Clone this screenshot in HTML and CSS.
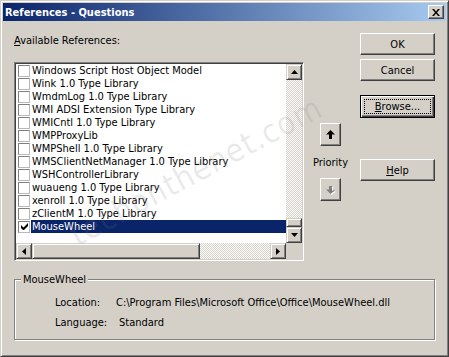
FILE: index.html
```html
<!DOCTYPE html>
<html>
<head>
<meta charset="utf-8">
<title>References - Questions</title>
<link rel="stylesheet" href="styles.css">
</head>
<body>
<div class="window">
  <div class="titlebar">
    <span class="title">References - Questions</span>
    <button class="close" aria-label="Close"><svg width="8" height="7" viewBox="0 0 8 7"><path d="M0 0h2l2 2.4L6 0h2L5 3.5 8 7H6L4 4.6 2 7H0l3-3.5z"/></svg></button>
  </div>
  <div class="main">
    <div class="listcol">
      <div class="label"><u>A</u>vailable References:</div>
      <div class="listbox">
        <ul class="items">
          <li><span class="cb"></span><span class="txt">Windows Script Host Object Model</span></li>
          <li><span class="cb"></span><span class="txt">Wink 1.0 Type Library</span></li>
          <li><span class="cb"></span><span class="txt">WmdmLog 1.0 Type Library</span></li>
          <li><span class="cb"></span><span class="txt">WMI ADSI Extension Type Library</span></li>
          <li><span class="cb"></span><span class="txt">WMICntl 1.0 Type Library</span></li>
          <li><span class="cb"></span><span class="txt">WMPProxyLib</span></li>
          <li><span class="cb"></span><span class="txt">WMPShell 1.0 Type Library</span></li>
          <li><span class="cb"></span><span class="txt">WMSClientNetManager 1.0 Type Library</span></li>
          <li><span class="cb"></span><span class="txt">WSHControllerLibrary</span></li>
          <li><span class="cb"></span><span class="txt">wuaueng 1.0 Type Library</span></li>
          <li><span class="cb"></span><span class="txt">xenroll 1.0 Type Library</span></li>
          <li><span class="cb"></span><span class="txt">zClientM 1.0 Type Library</span></li>
          <li class="sel"><span class="cb"><svg width="7" height="7" viewBox="0 0 7 7"><path d="M0 2v3l2 2h1l4-4V0L2.5 4.5z"/></svg></span><span class="txt">MouseWheel</span></li>
        </ul>
        <div class="vscroll">
          <div class="sbtn"><svg width="7" height="4" viewBox="0 0 7 4"><path d="M3.5 0L7 4H0z"/></svg></div>
          <div class="track"></div>
          <div class="vthumb"></div>
          <div class="sbtn"><svg width="7" height="4" viewBox="0 0 7 4"><path d="M0 0h7L3.5 4z"/></svg></div>
        </div>
        <div class="hscroll">
          <div class="sbtn"><svg width="4" height="7" viewBox="0 0 4 7"><path d="M0 3.5L4 0v7z"/></svg></div>
          <div class="hthumb"></div>
          <div class="track"></div>
          <div class="sbtn"><svg width="4" height="7" viewBox="0 0 4 7"><path d="M0 0l4 3.5L0 7z"/></svg></div>
        </div>
        <div class="corner"></div>
      </div>
    </div>
    <div class="prio">
      <button class="pbtn up"><svg width="9" height="9" viewBox="0 0 9 9"><path d="M4.5 0L9 4.5H6V9H3V4.5H0z"/></svg></button>
      <div class="plabel">Priority</div>
      <button class="pbtn down" disabled><svg width="10" height="10" viewBox="0 0 10 10"><path class="hl" d="M4 2h3v4.5h3L5.5 10 1 5.5h3z"/><path d="M3 1h3v4.5h3L4.5 9 0 4.5h3z"/></svg></button>
    </div>
    <div class="buttons">
      <button class="btn">OK</button>
      <button class="btn cancel">Cancel</button>
      <button class="btn default"><u>B</u>rowse...</button>
      <button class="btn help"><u>H</u>elp</button>
    </div>
  </div>
  <div class="group">
    <div class="legend">MouseWheel</div>
    <div class="info">
      <span>Location:</span><span>C:\Program Files\Microsoft Office\Office\MouseWheel.dll</span>
      <span>Language:</span><span class="std">Standard</span>
    </div>
  </div>
  <div class="watermark">techonthenet.com</div>
</div>
</body>
</html>
```

FILE: styles.css
```css
* { box-sizing: border-box; }
html, body { margin: 0; padding: 0; background: #d4d0c8; }
body {
  font-family: "DejaVu Sans Condensed", "DejaVu Sans", sans-serif;
  font-stretch: condensed;
  font-size: 11px;
  line-height: 13px;
  color: #000;
}
.window {
  position: relative;
  width: 449px;
  height: 357px;
  background: #d4d0c8;
  border: 1px solid;
  border-color: #d4d0c8 #404040 #404040 #d4d0c8;
  box-shadow: inset 1px 1px #fff, inset -1px -1px #808080;
  padding: 2px;
  display: flex;
  flex-direction: column;
  overflow: hidden;
}
.titlebar {
  height: 18px;
  background: linear-gradient(to right, #0a246a, #a6caf0);
  display: flex;
  align-items: center;
  justify-content: space-between;
  padding: 0 2px 0 2px;
}
.title { color: #fff; font-weight: bold; font-size: 11px; }
.close {
  width: 16px; height: 14px; padding: 0; margin: 0;
  background: #d4d0c8;
  border: 1px solid; border-color: #fff #404040 #404040 #fff;
  box-shadow: inset -1px -1px #808080, inset 1px 1px #d4d0c8;
  display: flex; align-items: center; justify-content: center;
}
.close svg { fill: #000; display: block; margin-left: -1px; }
.main {
  display: flex;
  padding: 12px 11px 0 11px;
}
.listcol { width: 290px; display: flex; flex-direction: column; }
.label { margin-top: 1px; height: 13px; }
.listbox {
  margin-top: 15px;
  height: 199px;
  border: 1px solid; border-color: #808080 #fff #fff #808080;
  box-shadow: inset 1px 1px #404040, inset -1px -1px #d4d0c8;
  padding: 1px;
  display: grid;
  grid-template-columns: 1fr 16px;
  grid-template-rows: 1fr 16px;
  background: #fff;
}
.items { list-style: none; margin: 0; padding: 0; background: #fff; overflow: hidden; }
.items li { height: 13px; display: flex; align-items: center; white-space: nowrap; }
.cb {
  width: 12px; height: 12px; margin-left: 2px; margin-right: 1px; flex: none;
  border: 1px solid; border-color: #808080 #b8b8b8 #b8b8b8 #808080;
  background: #fff;
  display: flex; align-items: center; justify-content: center;
}
.cb svg { display: block; fill: #000; }
.txt { flex: 1; padding-left: 1px; height: 13px; }
.sel .txt { background: #0a246a; color: #fff; }
.sbtn {
  width: 16px; height: 16px; flex: none;
  background: #d4d0c8;
  border: 1px solid; border-color: #d4d0c8 #404040 #404040 #d4d0c8;
  box-shadow: inset 1px 1px #fff, inset -1px -1px #808080;
  display: flex; align-items: center; justify-content: center;
}
.sbtn svg { display: block; fill: #000; }
.track {
  flex: 1;
  background: repeating-conic-gradient(#d4d0c8 0 25%, #fff 0 50%) 0 0 / 2px 2px;
}
.vscroll { display: flex; flex-direction: column; }
.vthumb, .hthumb {
  background: #d4d0c8;
  border: 1px solid; border-color: #d4d0c8 #404040 #404040 #d4d0c8;
  box-shadow: inset 1px 1px #fff, inset -1px -1px #808080;
}
.vthumb { height: 9px; }
.hscroll { display: flex; }
.hthumb { width: 168px; }
.corner { background: #d4d0c8; }
.prio {
  width: 21px; margin-left: 16px;
  display: flex; flex-direction: column; align-items: center;
}
.pbtn {
  width: 21px; height: 23px; padding: 0; margin: 0; flex: none;
  background: #d4d0c8;
  border: 1px solid; border-color: #fff #404040 #404040 #fff;
  box-shadow: inset -1px -1px #808080, inset 1px 1px #d4d0c8;
  display: flex; align-items: center; justify-content: center;
}
.pbtn.up { margin-top: 90px; }
.pbtn.up svg { fill: #000; display: block; }
.pbtn.down { margin-top: 9px; }
.pbtn.down svg { fill: #808080; display: block; }
.pbtn.down svg .hl { fill: #fff; }
.plabel { margin-top: 10px; white-space: nowrap; height: 13px; }
.buttons { width: 75px; margin-left: 19px; display: flex; flex-direction: column; }
.btn {
  width: 75px; height: 22px; padding: 0; margin: 0;
  font: inherit; color: #000;
  background: #d4d0c8;
  border: 1px solid; border-color: #fff #404040 #404040 #fff;
  box-shadow: inset -1px -1px #808080, inset 1px 1px #d4d0c8;
}
.cancel { margin-top: 4px; }
.default {
  margin-top: 14px; height: 23px;
  border-color: #000;
  box-shadow: inset 1px 1px #fff, inset -1px -1px #404040, inset -2px -2px #808080;
  outline: 1px dotted #000; outline-offset: -5px;
}
.help { margin-top: 41px; }
.group {
  margin: 18px 11px 0 11px;
  height: 61px;
  border: 1px solid #808080;
  box-shadow: inset 1px 1px #fff, 1px 1px #fff;
  padding: 0 0 0 40px;
}
.legend {
  margin: -7px 0 0 -34px;
  width: fit-content;
  padding: 0 2px;
  background: #d4d0c8;
  height: 13px;
}
.info {
  margin-top: 10px;
  display: grid;
  grid-template-columns: 61px auto;
  row-gap: 7px;
  white-space: nowrap;
}
.std { padding-left: 3px; }
.watermark {
  position: absolute;
  left: 45px; top: 150px;
  width: 300px;
  text-align: center;
  font-family: "DejaVu Sans", sans-serif;
  font-size: 32px; line-height: 40px;
  letter-spacing: 1px;
  color: rgba(120, 120, 120, 0.16);
  transform: rotate(-28deg);
  pointer-events: none;
}
```
